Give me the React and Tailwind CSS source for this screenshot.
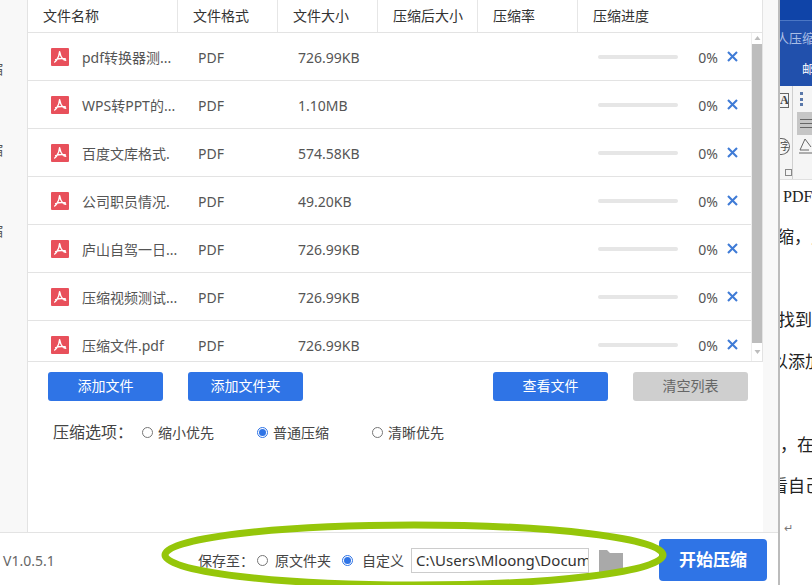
const rows = [
  ["pdf转换器测...", "726.99KB"],
  ["WPS转PPT的...", "1.10MB"],
  ["百度文库格式.", "574.58KB"],
  ["公司职员情况.", "49.20KB"],
  ["庐山自驾一日...", "726.99KB"],
  ["压缩视频测试...", "726.99KB"],
  ["压缩文件.pdf", "726.99KB"],
];

function PdfIcon() {
  return (
    <svg width="18" height="18" viewBox="0 0 18 18" className="shrink-0">
      <rect width="18" height="18" rx="1" fill="#e8505b" />
      <path d="M8.6 3.6c.5 2.8 1.6 5.8 3.2 7.4.9.9 2 1.2 2.9 1.2M8.6 3.6c-.2 3.2-1.5 6.4-3 8.4-.7.9-1.3 1.6-1.9 2M4.6 11.6c2.4-1 5.4-1.4 9.6-.8" fill="none" stroke="#fff" strokeWidth="1.4" strokeLinecap="round" />
    </svg>
  );
}

function Radio({ on }) {
  return on ? (
    <span className="w-[11px] h-[11px] rounded-full border border-[#2f74e6] flex items-center justify-center shrink-0">
      <span className="w-[7px] h-[7px] rounded-full bg-[#2f74e6]" />
    </span>
  ) : (
    <span className="w-[11px] h-[11px] rounded-full border border-[#767676] bg-white shrink-0" />
  );
}

function Head({ w, children }) {
  return (
    <div className={`${w} h-full flex items-center pl-[15px] pb-[2px] border-r border-[#e6e6e6] last:border-r-0 text-[14px] text-[#333]`}>
      {children}
    </div>
  );
}

function Row({ name, size }) {
  return (
    <div className="h-[48px] shrink-0 flex items-center border-b border-[#e3e3e3] text-[14px] text-[#555]">
      <div className="w-[150px] flex items-center gap-[13px] pl-[23px] overflow-hidden">
        <PdfIcon />
        <span className="whitespace-nowrap pt-[2px]">{name}</span>
      </div>
      <div className="w-[100px] pl-[20px] pt-[2px]">PDF</div>
      <div className="w-[100px] pl-[20px] pt-[2px]">{size}</div>
      <div className="w-[200px]" />
      <div className="w-[100px] pl-[20px]">
        <div className="w-[80px] h-[4px] rounded-full bg-[#e6e6e6]" />
      </div>
      <div className="w-[40px] text-right text-[#555] pt-[2px]">0%</div>
      <svg width="11" height="11" viewBox="0 0 11 11" className="ml-[9px]">
        <path d="M1 1l9 9M10 1l-9 9" stroke="#3f7bd6" strokeWidth="2.1" />
      </svg>
    </div>
  );
}

function Btn({ gray, children }) {
  return (
    <button className={`w-[115px] h-[29px] pb-[2px] rounded-[3px] text-[14px] ${gray ? "bg-[#cfcfcf] text-[#666]" : "bg-[#2f74e6] text-white"}`}>
      {children}
    </button>
  );
}

function Option({ on, w, children }) {
  return (
    <div className={`${w} flex items-center gap-[5px]`}>
      <Radio on={on} />
      <span>{children}</span>
    </div>
  );
}

function Doc() {
  return (
    <div className="w-[32px] h-full flex flex-col overflow-hidden bg-white font-['Liberation_Serif','Noto_Sans_CJK_SC',serif]">
      <div className="h-[21px] bg-[#0f44a8] border-b border-[#4c77c4] shrink-0" />
      <div className="h-[65px] bg-[#2150ac] shrink-0 text-white flex flex-col font-['Noto_Sans','Noto_Sans_CJK_SC',sans-serif] whitespace-nowrap">
        <span className="text-[13px] leading-[16px] mt-[9px] text-[#a9bee6] -ml-[4px]">人压缩PDF</span>
        <span className="text-[12px] leading-[16px] mt-[16px] ml-[22px]">邮件</span>
      </div>
      <div className="h-[94px] bg-[#f5f5f5] shrink-0 flex border-b border-[#e0e0e0]">
        <div className="w-[15px] flex flex-col items-start border-r border-[#cfcfcf] text-[#444]">
          <span className="w-[9px] h-[15px] border border-[#666] border-l-0 mt-[7px] text-[12px] leading-[13px] font-bold text-right overflow-hidden">A</span>
          <span className="w-[10px] h-[17px] border border-[#666] border-l-0 rounded-r-full mt-[30px] text-[10px] leading-[15px] overflow-hidden">字</span>
          <span className="w-[7px] h-[7px] border border-[#888] mt-[14px] ml-[5px]" />
        </div>
        <div className="flex-1 flex flex-col pt-[6px]">
          <div className="h-[14px] ml-[7px] flex flex-col justify-between">
            <span className="h-[3px] bg-[#5a78aa] w-[3px]" />
            <span className="h-[3px] bg-[#5a78aa] w-[3px]" />
            <span className="h-[3px] bg-[#5a78aa] w-[3px]" />
          </div>
          <div className="h-[23px] bg-[#c6c6c6] mt-[6px] ml-[4px] flex flex-col justify-center gap-[3px] pl-[3px]">
            <span className="h-[1px] bg-[#666]" />
            <span className="h-[1px] bg-[#666]" />
            <span className="h-[1px] bg-[#666]" />
          </div>
          <svg width="14" height="18" viewBox="0 0 14 18" className="ml-[5px] mt-[2px]">
            <path d="M1 16h13M2 13l5-11 6 8M2 13h9" fill="none" stroke="#666" />
          </svg>
        </div>
      </div>
      <div className="text-[17px] leading-[41.5px] text-[#222] whitespace-nowrap">
        <div className="h-[37px] leading-[34px] ml-[3px] text-[16px]">PDF</div>
        <div className="-ml-[3px]">缩，点</div>
        <div className="h-[41.5px]" />
        <div className="-ml-[2px]">找到</div>
        <div className="-ml-[9px]">以添加</div>
        <div className="h-[41.5px]" />
        <div>，在</div>
        <div className="-ml-[9px]">看自己</div>
        <div className="text-[11px] text-[#777] ml-[4px]">↵</div>
      </div>
    </div>
  );
}

export default function App() {
  return (
    <div className="relative w-[812px] h-[585px] overflow-hidden flex bg-white font-['Noto_Sans','Noto_Sans_CJK_SC',sans-serif]">
      <div className="w-[778px] h-full flex flex-col">
        <div className="h-[533px] shrink-0 flex border-b border-[#e3e3e3]">
          <div className="w-[28px] bg-[#f8f8f8] border-r border-[#e3e3e3] overflow-hidden flex flex-col gap-[65px] pt-[61px] text-[14px] leading-[16px] text-[#555]">
            <span className="-ml-[11px]">缩</span>
            <span className="-ml-[11px]">缩</span>
            <span className="-ml-[11px]">缩</span>
          </div>
          <div className="w-[735px] flex flex-col">
            <div className="h-[362px] flex flex-col border-b border-[#e3e3e3] border-r overflow-hidden">
              <div className="h-[33px] shrink-0 flex border-b border-[#e3e3e3]">
                <Head w="w-[150px]">文件名称</Head>
                <Head w="w-[100px]">文件格式</Head>
                <Head w="w-[100px]">文件大小</Head>
                <Head w="w-[100px]">压缩后大小</Head>
                <Head w="w-[100px]">压缩率</Head>
                <Head w="flex-1">压缩进度</Head>
              </div>
              <div className="flex-1 flex min-h-0">
                <div className="flex-1 flex flex-col overflow-hidden">
                  {rows.map((r, i) => (
                    <Row key={i} name={r[0]} size={r[1]} />
                  ))}
                </div>
                <div className="w-[11px] flex flex-col border-l border-[#eee] bg-white">
                  <svg width="11" height="11" viewBox="0 0 11 11" className="shrink-0">
                    <path d="M5.5 3l3 4h-6z" fill="#bdbdbd" />
                  </svg>
                  <div className="flex-1 bg-[#bdbdbd]" />
                  <svg width="11" height="18" viewBox="0 0 11 18" className="shrink-0">
                    <path d="M5.5 11l3-4h-6z" fill="#bdbdbd" />
                  </svg>
                </div>
              </div>
            </div>
            <div className="flex mt-[10px] pl-[20px]">
              <Btn>添加文件</Btn>
              <div className="ml-[25px]"><Btn>添加文件夹</Btn></div>
              <div className="ml-[190px]"><Btn>查看文件</Btn></div>
              <div className="ml-[25px]"><Btn gray>清空列表</Btn></div>
            </div>
            <div className="flex items-center mt-[21px] pl-[25px] h-[20px] text-[14px] text-[#444]">
              <span className="w-[89px] text-[16px] whitespace-nowrap">压缩选项：</span>
              <Option w="w-[115px]">缩小优先</Option>
              <Option w="w-[115px]" on>普通压缩</Option>
              <Option w="w-[100px]">清晰优先</Option>
            </div>
          </div>
          <div className="w-[15px] bg-[#f8f8f8]" />
        </div>
        <div className="flex-1 flex items-center pt-[2px] text-[14px] text-[#444]">
          <span className="w-[198px] pl-[3px] text-[#666]">V1.0.5.1</span>
          <span className="w-[59px] whitespace-nowrap">保存至：</span>
          <Option w="w-[85px]"><span className="ml-[2px]">原文件夹</span></Option>
          <div className="flex items-center gap-[9px] w-[69px]">
            <Radio on />
            <span>自定义</span>
          </div>
          <div className="w-[178px] h-[25px] border border-[#ccc] pl-[4px] flex items-center overflow-hidden text-[15px] text-[#333] whitespace-nowrap">
            C:\Users\Mloong\Documents
          </div>
          <svg width="24" height="23" viewBox="0 0 24 23" className="ml-[10px] mt-[2px] shrink-0">
            <path d="M0 0h8l3 3h13v20H0z" fill="#a9a9a9" />
          </svg>
          <button className="ml-[36px] w-[108px] h-[42px] rounded-[4px] bg-[#2f74e6] text-white text-[17px] font-bold">开始压缩</button>
        </div>
      </div>
      <div className="w-[2px] h-full bg-[#bcbcbc]" />
      <Doc />
      <svg width="812" height="585" viewBox="0 0 812 585" className="absolute inset-0 pointer-events-none">
        <ellipse cx="414" cy="555" rx="249" ry="30" fill="none" stroke="#95c60a" strokeWidth="7" />
      </svg>
    </div>
  );
}
